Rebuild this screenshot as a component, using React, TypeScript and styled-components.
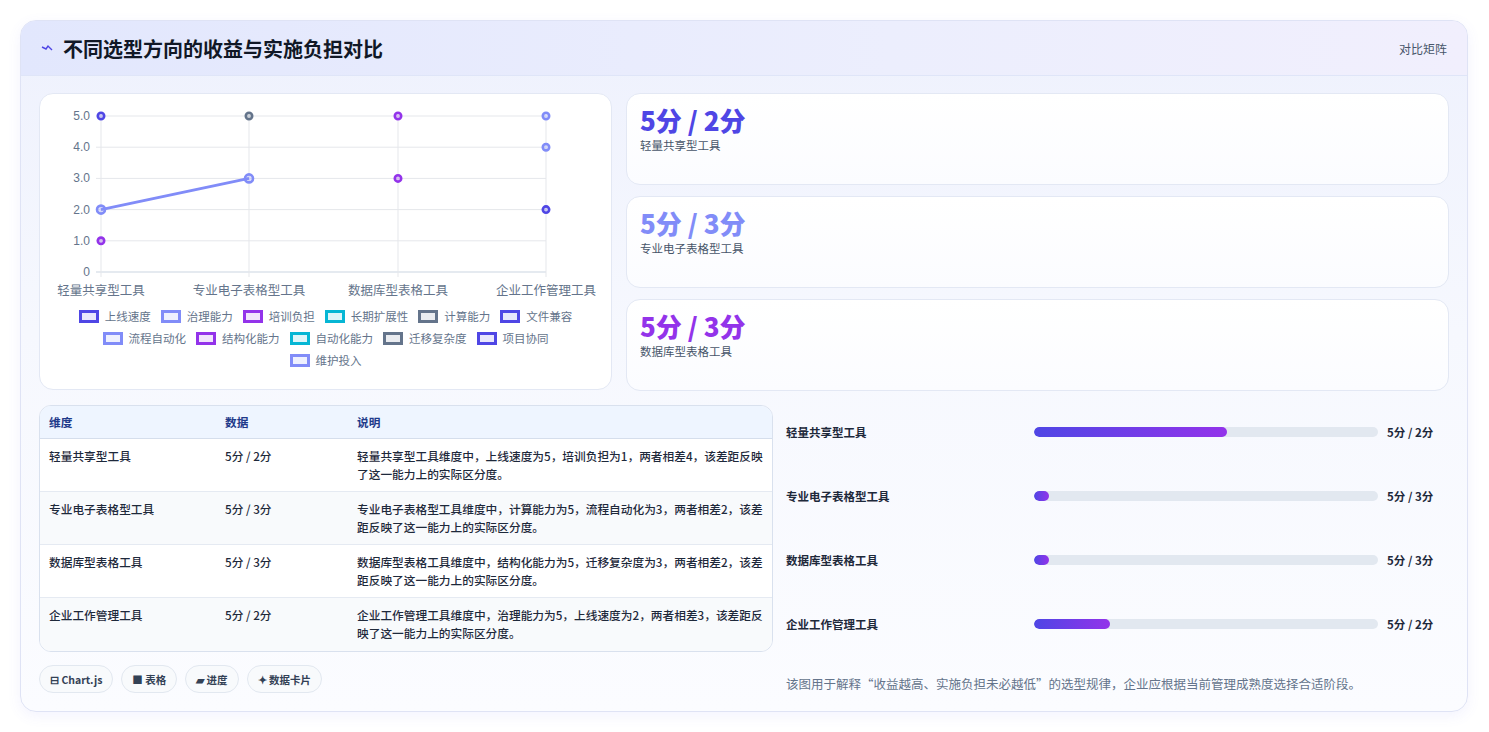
import React from "react";
import styled, { createGlobalStyle } from "styled-components";

const Global = createGlobalStyle`
  html, body { margin: 0; padding: 0; background: #ffffff; }
  body { font-family: "Noto Sans CJK SC", "Noto Sans", sans-serif; color: #1e293b; }
  * { box-sizing: border-box; }
`;

const Page = styled.div`
  padding: 20px 21px 20px 20px;
`;
const Card = styled.div`
  border: 1px solid #dfe3f5;
  border-radius: 16px;
  overflow: hidden;
  background: linear-gradient(180deg, #eef1fd 0%, #f6f8fe 45%, #fbfcff 100%);
  box-shadow: 0 4px 14px rgba(99, 102, 241, 0.08);
  height: 692px;
`;
const Header = styled.div`
  height: 55px;
  display: flex;
  align-items: center;
  justify-content: space-between;
  padding: 0 20px 0 20px;
  background: linear-gradient(90deg, #e2e7fd 0%, #eceefd 60%, #f1effd 100%);
  border-bottom: 1px solid #dfe5f8;
`;
const Title = styled.h1`
  margin: 0;
  font-size: 20px;
  font-weight: 700;
  color: #111827;
  display: flex;
  align-items: center;
  gap: 10px;
`;
const Tag = styled.span`
  font-size: 12px;
  color: #475569;
`;
const Body = styled.div`
  padding: 17px 18px 0 18px;
  display: flex;
  flex-direction: column;
  gap: 14px;
`;
const TopRow = styled.div`
  display: grid;
  grid-template-columns: 573px 1fr;
  gap: 14px;
`;
const Panel = styled.div`
  background: #ffffff;
  border: 1px solid #e3e8f4;
  border-radius: 14px;
`;
const ChartPanel = styled(Panel)`
  height: 297px;
  padding-top: 0;
`;
const Legend = styled.div`
  display: flex;
  flex-wrap: wrap;
  justify-content: center;
  gap: 6px 10px;
  padding: 6px 30px 0;
`;
const LegendItem = styled.div`
  display: flex;
  align-items: center;
  gap: 6px;
  font-size: 11.5px;
  color: #64748b;
  line-height: 16px;
`;
const Swatch = styled.span<{ $c: string }>`
  width: 20px;
  height: 13px;
  border: 3px solid ${(p) => p.$c};
  background: ${(p) => p.$c}22;
  display: inline-block;
`;
const StatCol = styled.div`
  display: flex;
  flex-direction: column;
  gap: 11px;
`;
const Stat = styled(Panel)`
  height: 92px;
  padding: 9px 13px;
  background: linear-gradient(180deg, #ffffff, #fbfcff);
`;
const StatValue = styled.div<{ $c: string }>`
  font-size: 26px;
  font-weight: 800;
  color: ${(p) => p.$c};
  line-height: 34px;
`;
const StatLabel = styled.div`
  font-size: 11.5px;
  color: #475569;
`;
const BottomRow = styled.div`
  display: grid;
  grid-template-columns: 734px 1fr;
  gap: 13px;
`;
const LeftCol = styled.div`
  display: flex;
  flex-direction: column;
  gap: 13px;
`;
const Table = styled.div`
  border: 1px solid #d9e1ee;
  border-radius: 12px;
  overflow: hidden;
  background: #fff;
`;
const Row = styled.div<{ $head?: boolean; $alt?: boolean }>`
  display: grid;
  grid-template-columns: 176px 132px 1fr;
  padding: ${(p) => (p.$head ? "0 10px 0 9px" : "8px 8px 9px 9px")};
  height: ${(p) => (p.$head ? "33px" : "53px")};
  align-items: ${(p) => (p.$head ? "center" : "start")};
  background: ${(p) => (p.$head ? "#eef5ff" : p.$alt ? "#f8fafc" : "#ffffff")};
  border-bottom: 1px solid ${(p) => (p.$head ? "#d5deec" : "#e5eaf2")};
  font-size: 11.7px;
  line-height: 18px;
  color: ${(p) => (p.$head ? "#1e3a8a" : "#1e293b")};
  font-weight: ${(p) => (p.$head ? 700 : 500)};
  &:last-child { border-bottom: none; }
`;
const Chips = styled.div`
  display: flex;
  gap: 8px;
`;
const Chip = styled.span`
  height: 28px;
  padding: 0 10px;
  border: 1px solid #e2e8f0;
  border-radius: 14px;
  background: #f8fafc;
  font-size: 10.5px;
  font-weight: 700;
  color: #334155;
  display: flex;
  align-items: center;
  gap: 3px;
`;
const Bars = styled.div`
  display: flex;
  flex-direction: column;
  padding-top: 17px;
`;
const BarRow = styled.div`
  height: 64px;
  display: grid;
  grid-template-columns: 248px 344px 1fr;
  align-items: start;
  font-size: 11.5px;
  font-weight: 600;
  color: #1e293b;
  line-height: 20px;
`;
const Track = styled.div`
  height: 10px;
  margin-top: 5px;
  background: #e2e8f0;
  border-radius: 5px;
  overflow: hidden;
`;
const Fill = styled.div`
  height: 100%;
  border-radius: 5px;
  background: linear-gradient(90deg, #4f46e5, #9333ea);
`;
const BarValue = styled.span`
  padding-left: 9px;
  font-weight: 700;
`;
const Note = styled.div`
  font-size: 12.5px;
  color: #64748b;
  margin-top: -4px;
`;

const cats = ["轻量共享型工具", "专业电子表格型工具", "数据库型表格工具", "企业工作管理工具"];
const xs = [61, 209, 358, 506];
const y = (v: number) => 178 - v * 31.2;

const points: [number, number, string][] = [
  [0, 5, "#4f46e5"], [0, 2, "#818cf8"], [0, 1, "#9333ea"],
  [1, 5, "#64748b"], [1, 3, "#818cf8"],
  [2, 5, "#9333ea"], [2, 3, "#9333ea"],
  [3, 5, "#818cf8"], [3, 4, "#818cf8"], [3, 2, "#4f46e5"],
];

const legend: [string, string][] = [
  ["上线速度", "#4f46e5"], ["治理能力", "#818cf8"], ["培训负担", "#9333ea"], ["长期扩展性", "#06b6d4"],
  ["计算能力", "#64748b"], ["文件兼容", "#4f46e5"], ["流程自动化", "#818cf8"], ["结构化能力", "#9333ea"],
  ["自动化能力", "#06b6d4"], ["迁移复杂度", "#64748b"], ["项目协同", "#4f46e5"], ["维护投入", "#818cf8"],
];

const Chart = () => (
  <svg width="573" height="208" style={{ display: "block" }}>
    {[0, 1, 2, 3, 4, 5].map((v) => (
      <g key={v}>
        <line x1={56} x2={506} y1={y(v)} y2={y(v)} stroke={v === 0 ? "#cbd5e1" : "#e5e7eb"} />
        <text x={50} y={y(v) + 4} fontSize="12" fill="#64748b" textAnchor="end" fontFamily="Liberation Sans, sans-serif">
          {v === 0 ? "0" : v.toFixed(1)}
        </text>
      </g>
    ))}
    {xs.map((x, i) => (
      <g key={i}>
        <line x1={x} x2={x} y1={y(5)} y2={183} stroke="#e5e7eb" />
        <text x={x} y={201} fontSize="12.5" fill="#64748b" textAnchor="middle">{cats[i]}</text>
      </g>
    ))}
    <line x1={xs[0]} y1={y(2)} x2={xs[1]} y2={y(3)} stroke="#818cf8" strokeWidth="3" />
    {points.map(([c, v, col], i) => (
      <circle key={i} cx={xs[c]} cy={y(v)} r={(v === 2 && c === 0) || (c === 1 && v === 3) ? 4 : 3.2} fill={col} fillOpacity={0.25} stroke={col} strokeWidth="2.6" />
    ))}
  </svg>
);

const rows = [
  ["轻量共享型工具", "5分 / 2分", "轻量共享型工具维度中，上线速度为5，培训负担为1，两者相差4，该差距反映了这一能力上的实际区分度。"],
  ["专业电子表格型工具", "5分 / 3分", "专业电子表格型工具维度中，计算能力为5，流程自动化为3，两者相差2，该差距反映了这一能力上的实际区分度。"],
  ["数据库型表格工具", "5分 / 3分", "数据库型表格工具维度中，结构化能力为5，迁移复杂度为3，两者相差2，该差距反映了这一能力上的实际区分度。"],
  ["企业工作管理工具", "5分 / 2分", "企业工作管理工具维度中，治理能力为5，上线速度为2，两者相差3，该差距反映了这一能力上的实际区分度。"],
];
const bars: [string, string, number][] = [
  ["轻量共享型工具", "5分 / 2分", 56],
  ["专业电子表格型工具", "5分 / 3分", 4.5],
  ["数据库型表格工具", "5分 / 3分", 4.5],
  ["企业工作管理工具", "5分 / 2分", 22],
];

export default function App() {
  return (
    <Page>
      <Global />
      <Card>
        <Header>
          <Title>
            <svg width="12" height="10" viewBox="0 0 12 10">
              <path d="M1 4 L5 6 L7 3 L11 7" stroke="#4f46e5" strokeWidth="1.4" fill="none" />
            </svg>
            不同选型方向的收益与实施负担对比
          </Title>
          <Tag>对比矩阵</Tag>
        </Header>
        <Body>
          <TopRow>
            <ChartPanel>
              <Chart />
              <Legend>
                {legend.map(([n, c]) => (
                  <LegendItem key={n}><Swatch $c={c} />{n}</LegendItem>
                ))}
              </Legend>
            </ChartPanel>
            <StatCol>
              <Stat><StatValue $c="#4f46e5">5分 / 2分</StatValue><StatLabel>轻量共享型工具</StatLabel></Stat>
              <Stat><StatValue $c="#818cf8">5分 / 3分</StatValue><StatLabel>专业电子表格型工具</StatLabel></Stat>
              <Stat><StatValue $c="#9333ea">5分 / 3分</StatValue><StatLabel>数据库型表格工具</StatLabel></Stat>
            </StatCol>
          </TopRow>
          <BottomRow>
            <LeftCol>
              <Table>
                <Row $head><span>维度</span><span>数据</span><span>说明</span></Row>
                {rows.map((r, i) => (
                  <Row key={i} $alt={i % 2 === 1}><span>{r[0]}</span><span>{r[1]}</span><span>{r[2]}</span></Row>
                ))}
              </Table>
              <Chips>
                <Chip>⊟ Chart.js</Chip>
                <Chip>■ 表格</Chip>
                <Chip>▰ 进度</Chip>
                <Chip>✦ 数据卡片</Chip>
              </Chips>
            </LeftCol>
            <Bars>
              {bars.map(([n, v, w]) => (
                <BarRow key={n}>
                  <span>{n}</span>
                  <Track><Fill style={{ width: `${w}%` }} /></Track>
                  <BarValue>{v}</BarValue>
                </BarRow>
              ))}
              <Note>该图用于解释“收益越高、实施负担未必越低”的选型规律，企业应根据当前管理成熟度选择合适阶段。</Note>
            </Bars>
          </BottomRow>
        </Body>
      </Card>
    </Page>
  );
}
